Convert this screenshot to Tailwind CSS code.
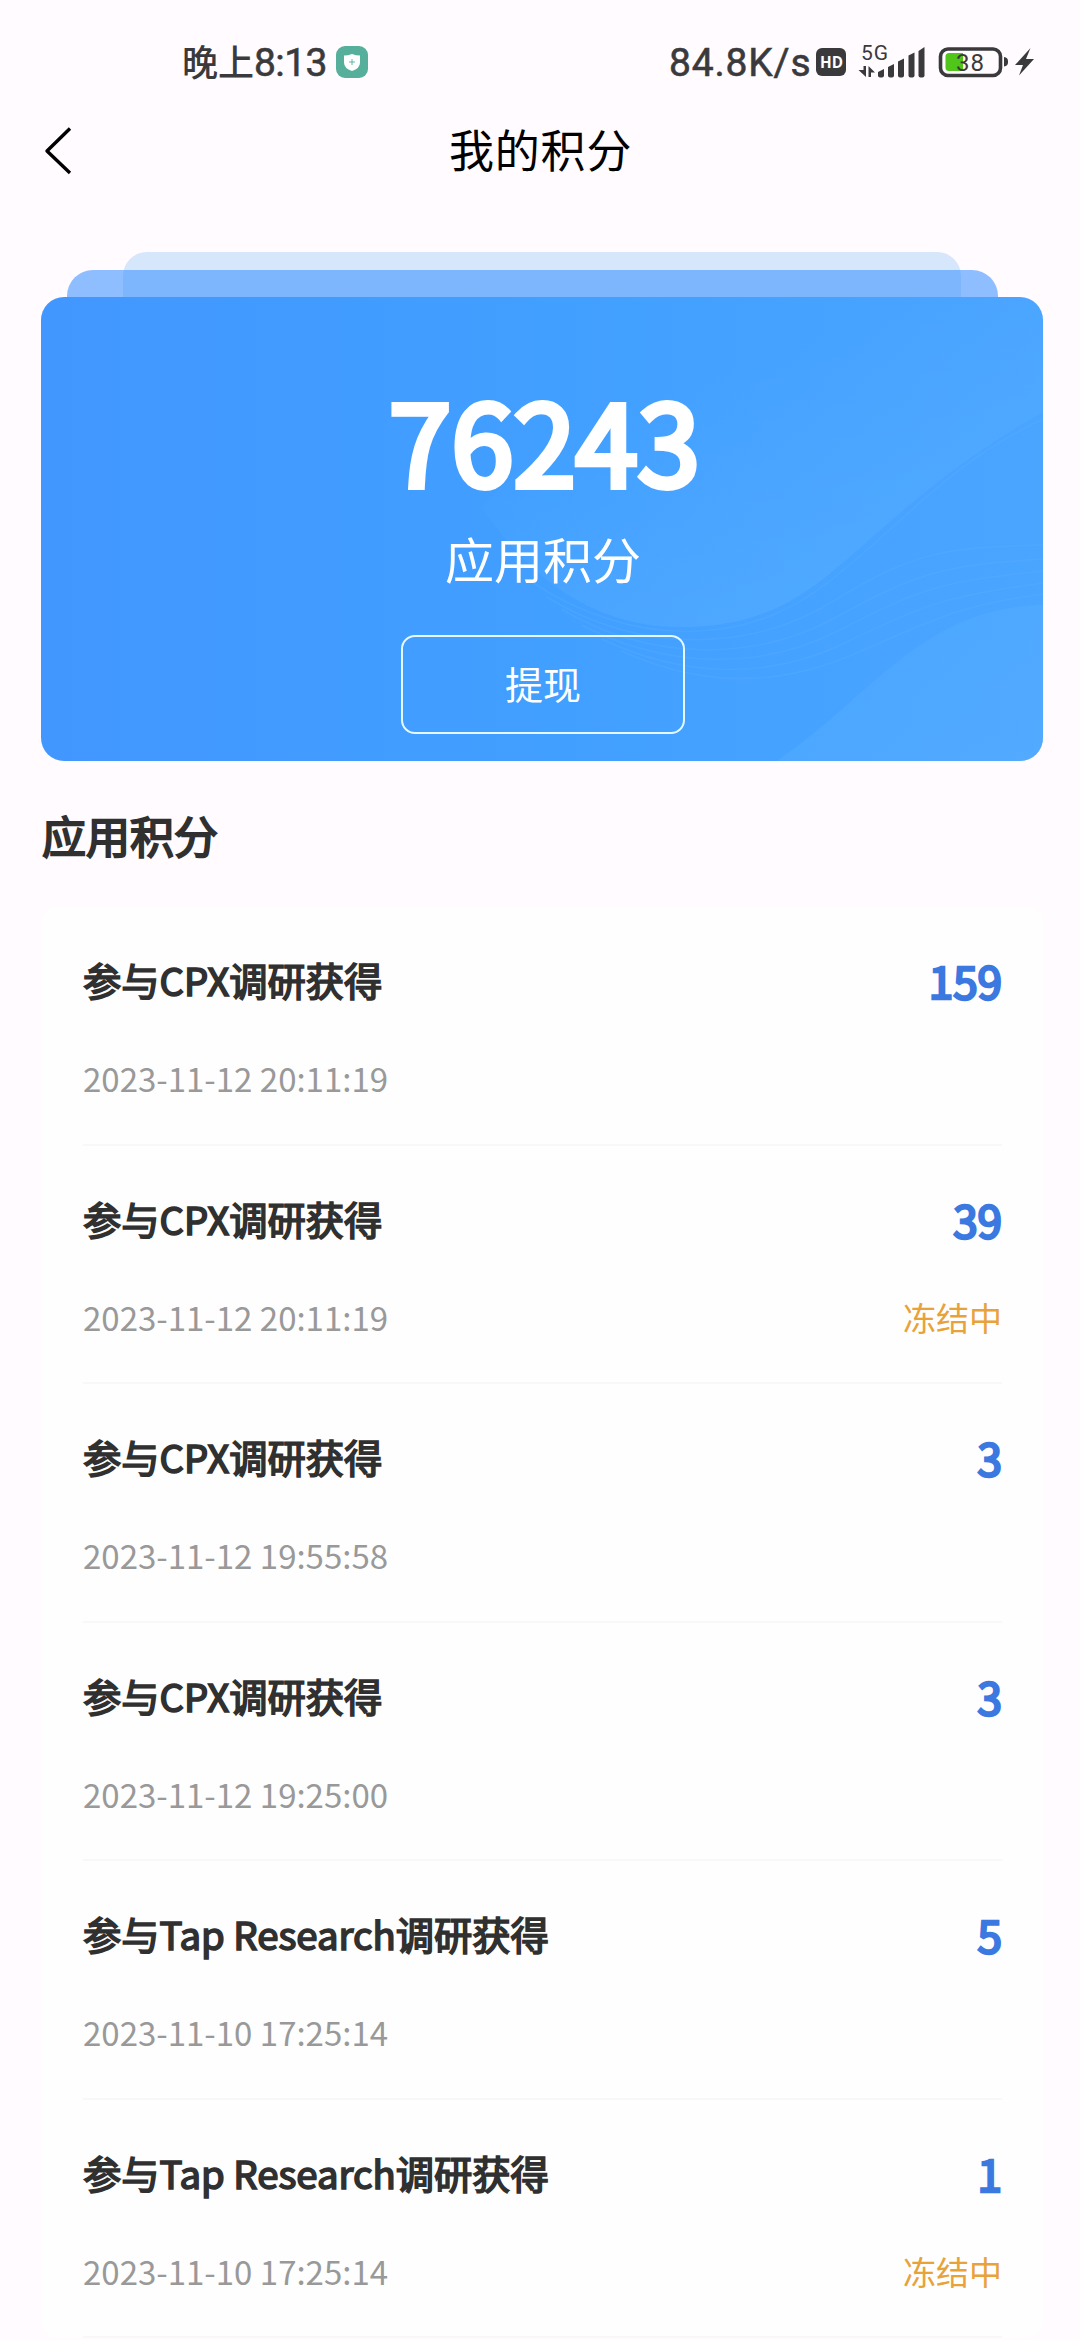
<!DOCTYPE html>
<html lang="zh-CN">
<head>
<meta charset="utf-8">
<title>我的积分</title>
<script src="https://cdn.jsdelivr.net/npm/@tailwindcss/browser@4"></script>
</head>
<body class="w-[1080px] h-[2340px] overflow-hidden bg-[#fffbff] font-['Noto_Sans_CJK_SC',sans-serif] text-[#303030]">

<!-- Status bar -->
<header class="flex h-[100px] items-start pt-[40px] pl-[182px] text-[#3a3a3c]">
  <div class="flex h-11 w-[154px] items-center whitespace-nowrap">
    <span class="mt-[-5px] text-[36px] leading-[44px] font-medium">晚上</span>
    <span class="font-['Roboto'] text-[39px] leading-[44px] tracking-[-0.6px] pt-px [-webkit-text-stroke:0.6px_#3a3a3c]">8:13</span>
  </div>
  <svg class="mt-[6px] h-8 w-8" viewBox="0 0 32 32"><rect width="32" height="32" rx="9" fill="#56af9b"/><path d="M8 9.500q4 0 8-1.500 4 1.500 8 1.500v7q0 6-8 8.500-8-2.500-8-8.500z" fill="#fff"/><path d="M16 13v6M13 16h6" stroke="#56af9b" stroke-width=".9"/></svg>
  <span class="ml-[301px] w-[147px] whitespace-nowrap font-['Roboto'] text-[39px] leading-[46px] tracking-[0.8px] [-webkit-text-stroke:0.6px_#3a3a3c]">84.8K/s</span>
  <svg class="h-[44px] w-[230px]" viewBox="816 40 230 44">
    <rect x="816" y="48" width="30" height="28" rx="6" fill="#3a3a3c"/>
    <text x="820" y="67.500" font-family="Open Sans" font-weight="700" font-size="16" textLength="23" lengthAdjust="spacingAndGlyphs" fill="#fff">HD</text>
    <text x="861" y="60" font-family="Roboto" font-size="21" textLength="27" fill="#3a3a3c">5G</text>
    <g fill="#3a3a3c">
      <path d="M863.500 66h2.500v11l-7.500-7h5z"/><path d="M868.500 77v-11l6.500 6.500h-4v4.500z"/>
      <path d="M878 72l6-3v6.500q0 2-2 2h-2q-2 0-2-2z"/>
      <path d="M888 67l6-3v11.500q0 2-2 2h-2q-2 0-2-2z"/>
      <path d="M898 61.500l6-3v17q0 2-2 2h-2q-2 0-2-2z"/>
      <path d="M908.500 55.500l6-3v23q0 2-2 2h-2q-2 0-2-2z"/>
      <path d="M918.500 51l6-4v28.500q0 2-2 2h-2q-2 0-2-2z"/>
    </g>
    <rect x="940.500" y="49" width="60" height="26.500" rx="7.500" fill="none" stroke="#3a3a3c" stroke-width="3.600"/>
    <path d="M949 53h14v18h-14q-3.500 0-3.500-3.500v-11q0-3.500 3.500-3.500z" fill="#50c61a"/>
    <text x="956" y="71" font-family="Roboto" font-size="24" textLength="28" fill="#3a3a3c">38</text>
    <path d="M1004 57q4 .5 4 4v1.500q0 3.500-4 4z" fill="#3a3a3c"/>
    <path d="M1030.500 48l-15.500 17h8l-4 10.500 15-16.500h-8z" fill="#3a3a3c"/>
  </svg>
</header>

<!-- Navigation -->
<nav class="flex h-[100px] items-center">
  <svg class="ml-[43px] h-[50px] w-[30px]" viewBox="0 0 30 50"><path d="M27 3.500L4 26 27 48" fill="none" stroke="#000" stroke-width="3.400" stroke-linejoin="round"/></svg>
  <h1 class="ml-[376px] mt-[-3px] text-[45px] leading-[50px] tracking-[0.8px] whitespace-nowrap text-black">我的积分</h1>
</nav>

<main class="pl-[41px] pr-[37px] pt-[52px]">
  <!-- Points card with two stacked sheets behind it -->
  <section class="relative pt-[45px]">
    <div class="absolute left-[82px] top-0 h-20 w-[838px] rounded-[24px] bg-[#d6e6fb]"></div>
    <div class="absolute left-[26px] top-[18px] h-20 w-[931px] rounded-[26px] bg-[#4296ff]/60"></div>
    <div class="relative flex h-[464px] flex-col items-center overflow-hidden rounded-[23px] bg-linear-to-r from-[#4297ff] via-[#419fff] to-[#4aa5ff] pt-[85px] pl-[2px] text-white">
      <svg class="absolute inset-0 h-full w-full" viewBox="0 0 1001 464" preserveAspectRatio="none">
        <defs>
          <linearGradient id="hill" x1="0" y1="0" x2=".6" y2="1"><stop offset=".35" stop-color="#5cb2ff" stop-opacity="0"/><stop offset="1" stop-color="#5cb2ff" stop-opacity=".45"/></linearGradient>
          <linearGradient id="corner" x1="0" y1="0" x2="1" y2="1"><stop offset="0" stop-color="#5ab2ff" stop-opacity=".15"/><stop offset="1" stop-color="#5aafff" stop-opacity=".55"/></linearGradient>
        </defs>
        <path d="M440 210Q520 330 640 330C790 330 800 230 1001 115V0H700Q560 90 440 210z" fill="url(#hill)"/>
        <path d="M735 464C830 400 880 310 1001 308V464z" fill="url(#corner)"/>
        <g fill="none" stroke="#62b4ff" stroke-opacity=".22" stroke-width="1.500">
          <path d="M490 285C590 350 700 350 780 290S900 170 1001 122"/>
          <path d="M505 300C600 358 710 354 790 305S900 250 1001 248"/>
          <path d="M520 312C610 366 715 364 795 320S900 268 1001 262"/>
          <path d="M540 328C625 372 720 374 800 332S905 284 1001 274"/>
          <path d="M560 342C640 380 725 384 805 345S910 298 1001 286"/>
          <path d="M580 354C655 388 730 392 810 358S915 308 1001 297"/>
        </g>
      </svg>
      <div class="relative pl-[3px] text-[112px] leading-[112px] [-webkit-text-stroke:6px_#fff]">76243</div>
      <div class="relative mt-[39px] text-[49px] leading-[50px]">应用积分</div>
      <button class="relative mt-[52px] flex h-[99px] w-[284px] items-center justify-center rounded-[14px] border-2 border-[#e4f8ff] pb-[3px] text-[38px] leading-[40px]">提现</button>
    </div>
  </section>

  <h2 class="mt-[52px] pl-px text-[44px] leading-[44px] [-webkit-text-stroke:2px_#303030]">应用积分</h2>

  <!-- Points history -->
  <ul id="list" class="mt-[50px] rounded-[16px] bg-[#fefefe] pr-[41px] pl-[42px]"></ul>
</main>

<script>
const rows = [
  ["参与CPX调研获得", "159", "2023-11-12 20:11:19", ""],
  ["参与CPX调研获得", "39", "2023-11-12 20:11:19", "冻结中"],
  ["参与CPX调研获得", "3", "2023-11-12 19:55:58", ""],
  ["参与CPX调研获得", "3", "2023-11-12 19:25:00", ""],
  ["参与Tap Research调研获得", "5", "2023-11-10 17:25:14", ""],
  ["参与Tap Research调研获得", "1", "2023-11-10 17:25:14", "冻结中"]
];
document.getElementById("list").innerHTML = rows.map(([title, points, time, state]) => `
  <li class="h-[238.500px] border-b-2 border-[#f9f8f9] pt-[53px]">
    <div class="flex h-10 items-center justify-between">
      <span class="text-[38.300px] leading-[40px] [-webkit-text-stroke:1.700px_#303030]">${title}</span>
      <span class="text-[44px] leading-[40px] text-[#3b78e0] [-webkit-text-stroke:2.600px_#3b78e0]">${points}</span>
    </div>
    <div class="mt-[58px] flex h-10 items-center justify-between">
      <time class="text-[33px] leading-[40px] text-[#999]">${time}</time>
      <span class="text-[33px] leading-[40px] text-[#e8a23a]">${state}</span>
    </div>
  </li>`).join("");
</script>
</body>
</html>
